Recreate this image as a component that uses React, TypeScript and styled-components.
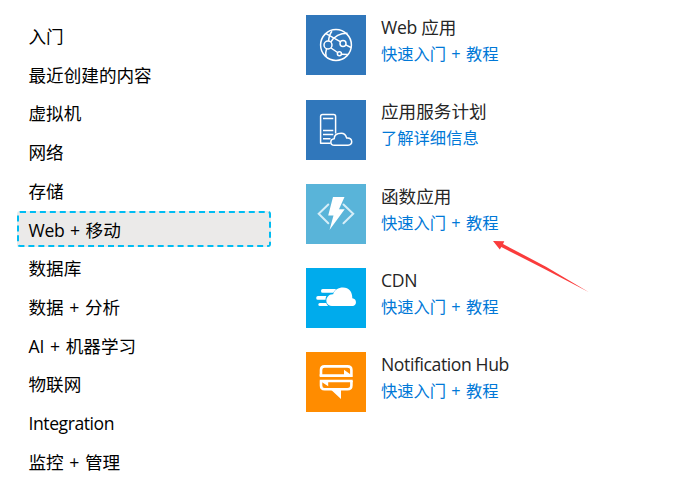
import React from "react";
import styled, { createGlobalStyle } from "styled-components";

const GlobalStyle = createGlobalStyle`
  * { box-sizing: border-box; }
  body {
    margin: 0;
    background: #fff;
    font-family: "Noto Sans", "Noto Sans CJK SC", sans-serif;
    overflow: hidden;
  }
`;

const Page = styled.main`
  position: relative;
  display: flex;
  width: 684px;
  height: 481px;
  overflow: hidden;
`;

const Sidebar = styled.nav`
  display: flex;
  flex-direction: column;
  gap: 2.73px;
  width: 254px;
  margin-left: 17px;
  padding-top: 17.5px;
  flex-shrink: 0;
`;

const Category = styled.a<{ $active?: boolean }>`
  display: flex;
  align-items: center;
  flex-shrink: 0;
  height: 36px;
  padding: 1px 0 0 9.5px;
  border: 2px dashed ${(p) => (p.$active ? "#00bcf2" : "transparent")};
  border-radius: 3px;
  background: ${(p) => (p.$active ? "#ebeae9" : "transparent")};
  color: #000;
  font-size: 17.6px;
  line-height: 24px;
  white-space: pre;
`;

const Latin = styled.span<{ $spacing?: number; $word?: number }>`
  font-family: "Open Sans", sans-serif;
  font-size: 1em;
  letter-spacing: ${(p) => p.$spacing ?? 0}px;
  word-spacing: ${(p) => p.$word ?? 0}px;
`;

const Services = styled.section`
  display: flex;
  flex-direction: column;
  gap: 24.25px;
  padding: 15.25px 0 0 35px;
`;

const Service = styled.article`
  display: flex;
  gap: 15px;
  height: 60px;
`;

const Tile = styled.div<{ $color: string }>`
  width: 60px;
  height: 60px;
  background: ${(p) => p.$color};

  svg { display: block; }
`;

const Details = styled.div`
  display: flex;
  flex-direction: column;
  margin-top: -0.1px;
  white-space: pre;
`;

const Title = styled.div`
  height: 26px;
  line-height: 25px;
  font-size: 17.6px;
  color: #252525;
`;

const Link = styled.a`
  height: 26px;
  line-height: 26px;
  font-size: 16.3px;
  color: #0078d7;
`;

const Arrow = styled.svg`
  position: absolute;
  left: 490px;
  top: 238px;
`;

const iconProps = { width: 60, height: 60, viewBox: "0 0 60 60", fill: "none" };

const WebIcon = () => (
  <svg {...iconProps} stroke="#fff" strokeWidth="1.5">
    <circle cx="30" cy="30" r="15.4" />
    <circle cx="22" cy="30" r="4" />
    <circle cx="37" cy="28.4" r="3" />
    <circle cx="33.4" cy="38.7" r="2" />
    <path d="M22.5 26C23 21.5 23.5 19 26 16.2M20 18.6L34.3 26.6M24.8 27C28 22 34 18.2 41.5 18.3M39.7 29.8L45 32.5M25 33L31.6 37.5M35.5 39.2L41.8 39.5M20.5 33.8C19.6 36.5 19.4 38.5 20.2 41.5" />
  </svg>
);

const PlanIcon = () => (
  <svg {...iconProps} stroke="#fff" strokeWidth="1.5" strokeLinejoin="round">
    <path d="M24.5 43.2H14.6V16.6Q14.6 14.6 16.6 14.6H27.6Q29.6 14.6 29.6 16.6V33.5" />
    <path d="M17 18.6H27.3M17 30.6H27.3M17 34.6H27.3M17 38.7H24.5" />
    <path d="M28.3 45.3C23.8 45.3 23.6 39.2 28.2 38.8C28.2 34.8 30.8 33.3 35.2 33.3C38.7 33.3 40 35.5 40.7 38.1C47 37.6 47.3 45.3 42 45.3Z" />
  </svg>
);

const FunctionIcon = () => (
  <svg {...iconProps}>
    <path d="M22.3 20.5L12.7 29.8L22.3 39.2M37.5 20.5L47.2 29.8L37.5 39.2" stroke="#d6eef8" strokeWidth="2" strokeLinecap="round" />
    <path d="M27 13H38.5L33 25.3H38.7L23.5 46L27.5 31.5H22.2Z" fill="#fff" />
  </svg>
);

const CdnIcon = () => (
  <svg {...iconProps} fill="#fff">
    <path d="M26 38C20.5 38 19 32 21.5 29C23 26.7 25 26.1 27.2 26.2C28.4 21.7 32.4 19.5 37 19.5C43 19.5 46.5 24 46.3 30.2C51.2 30.5 51.2 38 46.4 38Z" />
    <path d="M16.7 21H30L27.2 24.8H16.7Q15 24.8 15 22.9T16.7 21ZM12 28H20.4Q19.5 29.8 19.5 31.8H12Q10.2 31.8 10.2 29.9T12 28ZM14 35H20.2Q21 37 22.2 38.1H14Q12.3 38.1 12.3 36.5T14 35Z" />
  </svg>
);

const HubIcon = () => (
  <svg {...iconProps}>
    <path d="M15 24V18Q15 14.4 18.6 14.4H41.3Q45.4 14.4 45.4 18V24" stroke="#fff" strokeWidth="2.6" />
    <path d="M13.7 25.1V22.2H38V17.8L46.7 24V25.1Z" fill="#fff" />
    <path d="M15 29V33.5Q15 37.3 18.6 37.3H41.3Q45.4 37.3 45.4 33.5V29" stroke="#fff" strokeWidth="2.6" />
    <path d="M13.7 27.8H46.7V30.2H22.2V34.2L13.7 28.8ZM25.3 38H35V47Z" fill="#fff" />
  </svg>
);

type Part = { text: string; latin?: boolean; spacing?: number; word?: number };

const plus: Part = { text: " + ", latin: true, word: 1 };

const categories: Part[][] = [
  [{ text: "入门" }],
  [{ text: "最近创建的内容" }],
  [{ text: "虚拟机" }],
  [{ text: "网络" }],
  [{ text: "存储" }],
  [{ text: "Web", latin: true, spacing: -0.35 }, plus, { text: "移动" }],
  [{ text: "数据库" }],
  [{ text: "数据" }, plus, { text: "分析" }],
  [{ text: "AI", latin: true }, plus, { text: "机器学习" }],
  [{ text: "物联网" }],
  [{ text: "Integration", latin: true, spacing: -0.45 }],
  [{ text: "监控" }, plus, { text: "管理" }],
];

const tutorial: Part[] = [{ text: "快速入门" }, plus, { text: "教程" }];

const services: { color: string; icon: React.ReactNode; title: Part[]; link: Part[] }[] = [
  { color: "#3077bb", icon: <WebIcon />, title: [{ text: "Web ", latin: true, spacing: -0.3 }, { text: "应用" }], link: tutorial },
  { color: "#3077bb", icon: <PlanIcon />, title: [{ text: "应用服务计划" }], link: [{ text: "了解详细信息" }] },
  { color: "#59b4d9", icon: <FunctionIcon />, title: [{ text: "函数应用" }], link: tutorial },
  { color: "#00abec", icon: <CdnIcon />, title: [{ text: "CDN", latin: true, spacing: -0.3 }], link: tutorial },
  { color: "#ff8c00", icon: <HubIcon />, title: [{ text: "Notification Hub", latin: true, spacing: -0.4 }], link: tutorial },
];

const Label = ({ parts }: { parts: Part[] }) => (
  <span>
    {parts.map((p, i) =>
      p.latin ? (
        <Latin key={i} $spacing={p.spacing} $word={p.word}>{p.text}</Latin>
      ) : (
        <React.Fragment key={i}>{p.text}</React.Fragment>
      )
    )}
  </span>
);

export default function App() {
  return (
    <Page>
      <GlobalStyle />
      <Sidebar>
        {categories.map((parts, i) => (
          <Category key={i} $active={i === 5}><Label parts={parts} /></Category>
        ))}
      </Sidebar>
      <Services>
        {services.map((s, i) => (
          <Service key={i}>
            <Tile $color={s.color}>{s.icon}</Tile>
            <Details>
              <Title><Label parts={s.title} /></Title>
              <Link><Label parts={s.link} /></Link>
            </Details>
          </Service>
        ))}
      </Services>
      <Arrow width="102" height="58" viewBox="0 0 102 58" fill="#fa3c3c">
        <path d="M3 3L14.3 3.2L13 6L56 28.7L99 54.2L54 30.7L11.3 9L9.8 11.5Z" />
      </Arrow>
    </Page>
  );
}
